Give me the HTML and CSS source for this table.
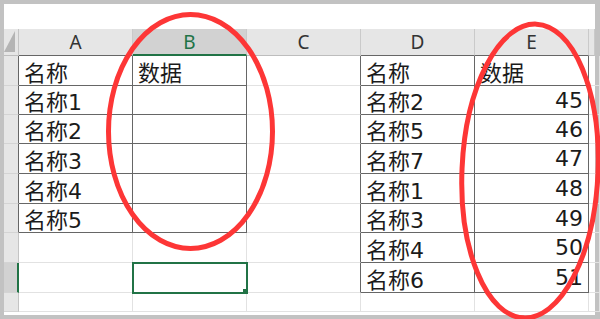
FILE: index.html
```html
<!DOCTYPE html>
<html lang="zh-CN">
<head>
    <meta charset="UTF-8">
    <meta name="viewport" content="width=device-width, initial-scale=1.0">
    <title>名称 数据</title>
    <link rel="stylesheet" href="styles.css">
</head>
<body>
    <div class="frame">
        <div class="sheet">
            <div class="formula"></div>
            <div class="grid">
                <!-- column headers -->
                <div class="corner"></div>
                <div class="hd eb">A</div>
                <div class="hd on">B</div>
                <div class="hd">C</div>
                <div class="hd eb">D</div>
                <div class="hd eb">E</div>
                <div class="hd"></div>

                <!-- row 1 -->
                <div class="rh er"></div>
                <div class="c er eb">名称</div>
                <div class="c er eb">数据</div>
                <div class="c er"></div>
                <div class="c er eb">名称</div>
                <div class="c er eb">数据</div>
                <div class="c"></div>

                <!-- row 2 -->
                <div class="rh er"></div>
                <div class="c er eb">名称1</div>
                <div class="c er eb"></div>
                <div class="c er"></div>
                <div class="c er eb">名称2</div>
                <div class="c num er eb">45</div>
                <div class="c"></div>

                <!-- row 3 -->
                <div class="rh er"></div>
                <div class="c er eb">名称2</div>
                <div class="c er eb"></div>
                <div class="c er"></div>
                <div class="c er eb">名称5</div>
                <div class="c num er eb">46</div>
                <div class="c"></div>

                <!-- row 4 -->
                <div class="rh er"></div>
                <div class="c er eb">名称3</div>
                <div class="c er eb"></div>
                <div class="c er"></div>
                <div class="c er eb">名称7</div>
                <div class="c num er eb">47</div>
                <div class="c"></div>

                <!-- row 5 -->
                <div class="rh er"></div>
                <div class="c er eb">名称4</div>
                <div class="c er eb"></div>
                <div class="c er"></div>
                <div class="c er eb">名称1</div>
                <div class="c num er eb">48</div>
                <div class="c"></div>

                <!-- row 6 -->
                <div class="rh er"></div>
                <div class="c er eb">名称5</div>
                <div class="c er eb"></div>
                <div class="c er"></div>
                <div class="c er eb">名称3</div>
                <div class="c num er eb">49</div>
                <div class="c"></div>

                <!-- row 7 -->
                <div class="rh"></div>
                <div class="c"></div>
                <div class="c"></div>
                <div class="c er"></div>
                <div class="c er eb">名称4</div>
                <div class="c num er eb">50</div>
                <div class="c"></div>

                <!-- row 8, active cell in column B -->
                <div class="rh on"></div>
                <div class="c"></div>
                <div class="c sel"></div>
                <div class="c er"></div>
                <div class="c er eb">名称6</div>
                <div class="c num er eb">51</div>
                <div class="c"></div>

                <!-- row 9 -->
                <div class="rh"></div>
                <div class="c"></div>
                <div class="c"></div>
                <div class="c"></div>
                <div class="c"></div>
                <div class="c"></div>
                <div class="c"></div>
            </div>
        </div>

        <!-- hand-drawn circles on top of the sheet -->
        <svg class="marks" width="600" height="319" viewBox="0 0 600 319">
            <ellipse cx="190.5" cy="131.5" rx="82" ry="117" />
            <ellipse cx="530" cy="171" rx="68" ry="147" transform="rotate(2.5 530 171)" />
        </svg>
    </div>
</body>
</html>
```

FILE: styles.css
```css
body {
    margin: 0;
    background-color: #c2c2c2;
    font-family: "Noto Sans CJK SC", sans-serif;
}
.frame {
    position: relative;
    width: 600px;
    height: 319px;
    box-sizing: border-box;
    padding: 4px 5px 4px 4px;
    overflow: hidden;
}
.sheet {
    height: 100%;
    background-color: #fff;
}
.formula {
    height: 25px;
}
.grid {
    display: grid;
    grid-template-columns: 15px repeat(5, 114px) 6px;
    grid-template-rows: 27px 30px 29px 29px 30px 30px 29px 30px 30px 19px;
}
.grid > div {
    box-sizing: border-box;
    border-right: 1px solid #e2e2e2;
    border-bottom: 1px solid #e2e2e2;
    display: flex;
    align-items: center;
    overflow: hidden;
    white-space: nowrap;
}
.grid > .c {
    padding: 0 5px;
    font-family: "DejaVu Sans", "Noto Sans CJK SC", sans-serif;
    font-size: 22px;
    color: #1b1b1b;
}
.grid > .num {
    justify-content: flex-end;
}
.grid > .hd {
    justify-content: center;
    background-color: #e6e6e6;
    border-right-color: #cacaca;
    border-bottom-color: #bdbdbd;
    font-family: "Noto Sans", sans-serif;
    font-size: 19px;
    color: #333;
}
.grid > .hd.on {
    background-color: #d2d2d2;
    color: #217346;
    border-bottom: 2px solid #217346;
}
.grid > .rh {
    background-color: #e6e6e6;
    border-right-color: #c4c4c4;
    border-bottom-color: #d4d4d4;
}
.grid > .rh.on {
    background-color: #d2d2d2;
    border-right: 2px solid #217346;
}
.grid > .corner {
    position: relative;
    background-color: #e6e6e6;
    border-right-color: #c4c4c4;
    border-bottom-color: #bdbdbd;
}
.corner::after {
    content: "";
    position: absolute;
    right: 3px;
    bottom: 3px;
    width: 11px;
    height: 21px;
    background-color: #b4b4b4;
    clip-path: polygon(100% 0, 100% 100%, 0 100%);
}

/* cell borders of the two data tables */
.grid > .er {
    border-right-color: #666;
}
.grid > .eb {
    border-bottom-color: #666;
}

/* active cell with fill handle */
.grid > .sel {
    position: relative;
    outline: 2px solid #217346;
    outline-offset: -1px;
}
.sel::after {
    content: "";
    position: absolute;
    right: -3px;
    bottom: -3px;
    width: 5px;
    height: 5px;
    background-color: #217346;
    border: 1px solid #fff;
}

.marks {
    position: absolute;
    top: 0;
    left: 0;
    pointer-events: none;
}
.marks ellipse {
    fill: none;
    stroke: #fd3636;
    stroke-width: 5;
}
```
